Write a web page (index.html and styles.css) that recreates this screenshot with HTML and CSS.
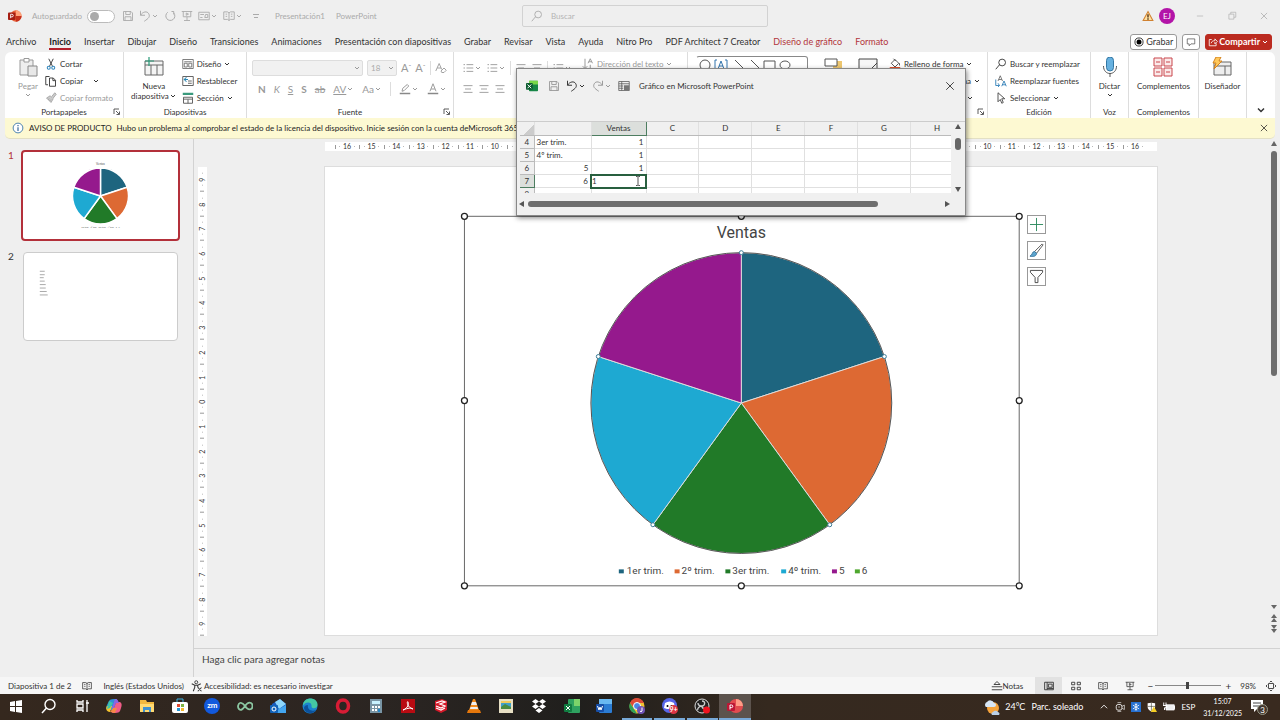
FILE: index.html
```html
<!DOCTYPE html>
<html lang="es">
<head>
<meta charset="utf-8">
<title>Presentación1 - PowerPoint</title>
<link rel="stylesheet" href="styles.css">
</head>
<body>
<svg class="defs" aria-hidden="true">
  <symbol id="chev" viewBox="0 0 8 8"><path d="M2 3l2 2 2-2" fill="none" stroke="currentColor"/></symbol>
  <symbol id="launch" viewBox="0 0 8 8"><path d="M1 6V1h5M3 3l3 3M6.500 3.500v3h-3" fill="none" stroke="currentColor" stroke-width=".8"/></symbol>
  <symbol id="x" viewBox="0 0 16 16"><path d="M3 3l10 10M13 3L3 13" fill="none" stroke="currentColor" stroke-width="1.200"/></symbol>
  <symbol id="save" viewBox="0 0 16 16"><path d="M2 2h10l2 2v10H2zM5 2v4h6V2M4 14V9h8v5" fill="none" stroke="currentColor" stroke-width="1.200"/></symbol>
  <symbol id="undo" viewBox="0 0 16 16"><path d="M2 1v6h6M2 7c3-5 9-6 11-2s0 6-6 10" fill="none" stroke="currentColor" stroke-width="1.300"/></symbol>
  <symbol id="redo" viewBox="0 0 16 16"><path d="M14 1v6H8M14 7C11 2 5 1 3 5s0 6 6 10" fill="none" stroke="currentColor" stroke-width="1.300"/></symbol>
  <symbol id="repeat" viewBox="0 0 16 16"><path d="M10 2h3v4M13 4a6 6 0 1 1-8-1" fill="none" stroke="currentColor" stroke-width="1.300"/></symbol>
  <symbol id="search" viewBox="0 0 16 16"><circle cx="9.500" cy="6" r="4.500" fill="none" stroke="currentColor" stroke-width="1.200"/><path d="M6 9l-5 6" stroke="currentColor" stroke-width="1.200"/></symbol>
  <symbol id="show" viewBox="0 0 16 16"><path d="M1 2h14M3 2v7h10V2M8 9v5M4 14h8M7 4l3 1.500L7 7z" fill="none" stroke="currentColor" stroke-width="1.200"/></symbol>
  <symbol id="card" viewBox="0 0 16 16"><path d="M1 3h14v10H1zM3 6h5M3 10h3M9 10h4V6h-3z" fill="none" stroke="currentColor" stroke-width="1.200"/></symbol>
  <symbol id="book" viewBox="0 0 16 16"><path d="M8 3v11M1 2.500h5l2 1.500 2-1.500h5v10h-5L8 14l-2-1.500H1zM3.500 5.500h2M3.500 8.500h2M10.500 5.500h2M10.500 8.500h2" fill="none" stroke="currentColor" stroke-width="1.200"/></symbol>
  <symbol id="lines" viewBox="0 0 16 16"><path d="M2 3.500h12M4 8h8M2 12.500h12" stroke="currentColor" stroke-width="1.200"/></symbol>
  <symbol id="bullets" viewBox="0 0 16 16"><path d="M6 3.500h9M6 8h9M6 12.500h9M2 3.500h2M2 8h2M2 12.500h2" stroke="currentColor" stroke-width="1.200"/></symbol>
  <symbol id="pie" viewBox="0 0 836 470">
    <path d="M418 237V86A151 151 0 0 1 561.600 190.300z" fill="#1e657f"/>
    <path d="M418 237L561.600 190.300A151 151 0 0 1 506.800 359.200z" fill="#dd6933"/>
    <path d="M418 237L506.800 359.200A151 151 0 0 1 329.200 359.200z" fill="#217a28"/>
    <path d="M418 237L329.200 359.200A151 151 0 0 1 274.400 190.300z" fill="#1ea9d2"/>
    <path d="M418 237L274.400 190.300A151 151 0 0 1 418 86z" fill="#95198d"/>
  </symbol>
</svg>

<header class="titlebar">
  <div class="quick">
    <svg class="i14" viewBox="0 0 16 16"><circle cx="9" cy="8" r="6.500" fill="#e8623a"/><path d="M9 1.500A6.500 6.500 0 0 1 15.500 8H9z" fill="#ffa37b"/><path d="M9 8h6.500A6.500 6.500 0 0 1 9 14.500z" fill="#c5301c"/><rect y="4" width="8.500" height="8.500" rx="1" fill="#a51d12"/><path d="M3 10.500V6h1.500a1.500 1.500 0 0 1 0 3H3" fill="none" stroke="#fff"/></svg>
    <label class="auto">Autoguardado <input type="checkbox" class="switch"></label>
    <button aria-label="Guardar"><svg class="i12"><use href="#save"/></svg></button>
    <button aria-label="Deshacer"><svg class="i12"><use href="#undo"/></svg><svg class="i8"><use href="#chev"/></svg></button>
    <button aria-label="Repetir"><svg class="i12"><use href="#repeat"/></svg></button>
    <button aria-label="Presentar"><svg class="i12"><use href="#show"/></svg></button>
    <button aria-label="Diseños"><svg class="i12"><use href="#card"/></svg><svg class="i8"><use href="#chev"/></svg></button>
    <button aria-label="Vista de lectura"><svg class="i12"><use href="#book"/></svg><svg class="i8"><use href="#chev"/></svg></button>
    <button class="more" aria-label="Personalizar"><svg class="i8" viewBox="0 0 8 8"><path d="M1 2.500h6M2 5.500h4" stroke="currentColor"/></svg></button>
    <span>Presentación1</span><span class="app">PowerPoint</span>
  </div>
  <label class="search"><svg class="i12"><use href="#search"/></svg><input type="text" placeholder="Buscar" aria-label="Buscar"></label>
  <div class="window">
    <svg class="i12" viewBox="0 0 16 16"><path d="M8 2l6.500 12h-13z" fill="#ffe0a0" stroke="#d08130" stroke-width="1.400"/><path d="M8 5.500V10M8 11v2" stroke="#4a2c10" stroke-width="1.800"/></svg>
    <span class="avatar">EJ</span>
    <button aria-label="Minimizar"><svg class="i10" viewBox="0 0 16 16"><path d="M3 8h10" stroke="currentColor"/></svg></button>
    <button aria-label="Restaurar"><svg class="i10" viewBox="0 0 16 16"><path d="M3 5h8v8H3zM6 5V2h8v8h-3" fill="none" stroke="currentColor"/></svg></button>
    <button aria-label="Cerrar"><svg class="i10"><use href="#x"/></svg></button>
  </div>
</header>

<nav class="tabs">
  <button>Archivo</button><button class="current">Inicio</button><button>Insertar</button><button>Dibujar</button><button>Diseño</button><button>Transiciones</button><button>Animaciones</button><button>Presentación con diapositivas</button><button>Grabar</button><button>Revisar</button><button>Vista</button><button>Ayuda</button><button>Nitro Pro</button><button>PDF Architect 7 Creator</button><button class="context">Diseño de gráfico</button><button class="context">Formato</button>
  <div class="actions">
    <button class="box"><svg class="i10" viewBox="0 0 16 16"><circle cx="8" cy="8" r="6.500" fill="none" stroke="currentColor" stroke-width="1.500"/><circle cx="8" cy="8" r="4"/></svg>Grabar</button>
    <button class="box" aria-label="Comentarios"><svg class="i10" viewBox="0 0 16 16"><path d="M2 3h12v8H8l-3 3v-3H2z" fill="none" stroke="currentColor"/></svg></button>
    <button class="box share"><svg class="i10" viewBox="0 0 16 16"><path d="M6 4H2v10h11v-4M5 10c1-4 4-4 6-4V3l4 4-4 4V8" fill="none" stroke="currentColor" stroke-width="1.300"/></svg>Compartir<svg class="i8"><use href="#chev"/></svg></button>
  </div>
</nav>

<section class="ribbon">
  <div class="group">
    <div class="body clipboard">
      <button class="big off"><svg class="i20" viewBox="0 0 20 20"><path d="M2 3h13v15H2z" fill="#eee" stroke="#999"/><path d="M6 1.500h5V5H6z" fill="#fff" stroke="#999"/><path d="M10 9h9v10h-9z" fill="#e8e8e8" stroke="#888"/></svg>Pegar<svg class="i8"><use href="#chev"/></svg></button>
      <div class="rows">
        <button><svg class="i12" viewBox="0 0 16 16"><path d="M5 1l5 10M11 1L6 11" stroke="#333" stroke-width="1.200"/><circle cx="5" cy="13" r="2" fill="none" stroke="#3287bd" stroke-width="1.400"/><circle cx="11" cy="13" r="2" fill="none" stroke="#3287bd" stroke-width="1.400"/></svg>Cortar</button>
        <button><svg class="i12" viewBox="0 0 16 16"><path d="M4 13H1V2h5M6 4h5l3 3v8H6zM10.500 4v3.500H14" fill="none" stroke="#333" stroke-width="1.200"/></svg>Copiar<svg class="i8 wide"><use href="#chev"/></svg></button>
        <button class="off"><svg class="i12" viewBox="0 0 16 16"><path d="M2 8l6 6 3-5-4-4zM9 6l4-5 2 2-4 5M4 10l2-1M6 12l2-2" fill="#ccc" stroke="#999"/></svg>Copiar formato</button>
      </div>
    </div>
    <footer>Portapapeles<svg class="i8 launch"><use href="#launch"/></svg></footer>
  </div>
  <div class="group">
    <div class="body slides">
      <button class="big"><svg class="i20" viewBox="0 0 20 20"><path d="M1 4h18v14H1zM1 8h18M7 8v10M13 8v10" fill="#f4f4f4" stroke="#666"/><path d="M5 0v9M1 4h9" stroke="#2a9a78" stroke-width="1.200"/></svg>Nueva<span>diapositiva<svg class="i8"><use href="#chev"/></svg></span></button>
      <div class="rows">
        <button><svg class="i12" viewBox="0 0 16 16"><path d="M1 2h14v12H1zM3 5h10M3 7h4v5H3zM9 7h4v5H9z" fill="none" stroke="#555"/></svg>Diseño<svg class="i8"><use href="#chev"/></svg></button>
        <button><svg class="i12" viewBox="0 0 16 16"><path d="M1 2h14v12H1zM8 8h5M8 11h5" fill="none" stroke="#555" stroke-width="1.200"/><path d="M6 3L3 6l3 3M3 6h5" fill="none" stroke="#2a88b5" stroke-width="1.400"/></svg>Restablecer</button>
        <button><svg class="i12" viewBox="0 0 16 16"><path d="M1 1h14v3H1z" fill="#3a9a7c"/><path d="M2 7h12v8H2zM2 9.500h12M8 10v5" fill="none" stroke="#555" stroke-width="1.200"/></svg>Sección<svg class="i8"><use href="#chev"/></svg></button>
      </div>
    </div>
    <footer>Diapositivas</footer>
  </div>
  <div class="group off">
    <div class="body two">
      <div class="line">
        <span class="pick name"><select disabled aria-label="Fuente"><option></option></select><svg class="i8"><use href="#chev"/></svg></span>
        <span class="pick"><select disabled aria-label="Tamaño"><option>18</option></select><svg class="i8"><use href="#chev"/></svg></span>
        <button class="glyph">A<sup>ˆ</sup></button><button class="glyph">A<sup>ˇ</sup></button><i></i><button aria-label="Borrar formato"><svg class="i12" viewBox="0 0 16 16"><path d="M1 12L5.500 2 9 10M3 8h5M8 12l4-4 3 3-3 3H9z" fill="none" stroke="currentColor" stroke-width="1.200"/></svg></button>
      </div>
      <div class="line fonts">
        <button><b>N</b></button><button><em>K</em></button><button><u>S</u></button><button><b>S</b></button><button><s>ab</s></button><button><u>AV</u><svg class="i8"><use href="#chev"/></svg></button><button>Aa<svg class="i8"><use href="#chev"/></svg></button><i></i>
        <button aria-label="Resaltado"><svg class="i12" viewBox="0 0 16 16"><path d="M4 11l1-4 6-5 2 2-6 6z" fill="none" stroke="currentColor" stroke-width="1.300"/><path d="M1 13h14v2H1z" fill="#888"/></svg><svg class="i8"><use href="#chev"/></svg></button>
        <button aria-label="Color de fuente"><svg class="i12" viewBox="0 0 16 16"><path d="M4 11l4-10 4 10M5.500 8h5" fill="none" stroke="currentColor" stroke-width="1.300"/><path d="M1 13h14v2H1z" fill="#888"/></svg><svg class="i8"><use href="#chev"/></svg></button>
      </div>
    </div>
    <footer>Fuente<svg class="i8 launch"><use href="#launch"/></svg></footer>
  </div>
  <div class="group off">
    <div class="body">
      <div class="two para">
        <div class="line"><button aria-label="Viñetas"><svg class="i12"><use href="#bullets"/></svg><svg class="i8"><use href="#chev"/></svg></button><button aria-label="Numeración"><svg class="i12"><use href="#bullets"/></svg><svg class="i8"><use href="#chev"/></svg></button><i></i><button aria-label="Reducir sangría"><svg class="i12"><use href="#lines"/></svg></button><button aria-label="Aumentar sangría"><svg class="i12"><use href="#lines"/></svg></button><i></i><button aria-label="Interlineado"><svg class="i12"><use href="#bullets"/></svg><svg class="i8"><use href="#chev"/></svg></button></div>
        <div class="line"><button aria-label="Izquierda"><svg class="i12"><use href="#lines"/></svg></button><button aria-label="Centrar"><svg class="i12"><use href="#lines"/></svg></button><button aria-label="Derecha"><svg class="i12"><use href="#lines"/></svg></button></div>
      </div>
      <div class="rows"><button><svg class="i12" viewBox="0 0 16 16"><path d="M4 1v13M1 11l3 3 3-3M8 7l3-6 3 6M9 5h4M11 9v6" fill="none" stroke="currentColor" stroke-width="1.300"/></svg>Dirección del texto<svg class="i8"><use href="#chev"/></svg></button></div>
    </div>
    <footer>Párrafo</footer>
  </div>
  <div class="group">
    <div class="body draw">
      <div class="gallery">
        <svg viewBox="0 0 108 16"><g fill="none" stroke="#555"><circle cx="8" cy="8" r="5"/><path d="M38 3l9 9M54 3l9 9M67 4h11v8H67z"/><ellipse cx="88" cy="8" rx="5" ry="4"/><path d="M20 3h-2v10h2M28 3h2v10h-2" stroke="#3375ad"/><path d="M21 12l3-8 3 8M22 9h4" stroke="#3375ad"/></g></svg>
      </div>
      <svg class="i20" viewBox="0 0 20 20"><path d="M10 5h9v9h-9z" fill="#edc66f"/><path d="M2 3h12v7H2z" fill="#fff" stroke="#555"/></svg>
      <svg class="i20" viewBox="0 0 20 20"><path d="M1 3h18v14H1z" fill="#f7f7f7" stroke="#444"/><path d="M14 12l5-5" stroke="#444"/></svg>
      <div class="rows">
        <button><svg class="i12" viewBox="0 0 16 16"><path d="M3 7l5-5 5 5-5 5zM6 1l3 3M14 7v3" fill="none" stroke="#444" stroke-width="1.200"/><path d="M1 12h14v3H1z" fill="#e0532e"/></svg>Relleno de forma<svg class="i8"><use href="#chev"/></svg></button>
        <button><svg class="i12" viewBox="0 0 16 16"><path d="M4 11l7-8 2 2-7 7z" fill="none" stroke="#444"/></svg>Contorno de forma<svg class="i8"><use href="#chev"/></svg></button>
        <button><svg class="i12" viewBox="0 0 16 16"><path d="M3 3h10v10H3z" fill="none" stroke="#444"/></svg>Efectos de forma<svg class="i8"><use href="#chev"/></svg></button>
      </div>
    </div>
    <footer>Dibujo<svg class="i8 launch"><use href="#launch"/></svg></footer>
  </div>
  <div class="group">
    <div class="body edit">
      <div class="rows">
        <button><svg class="i12"><use href="#search"/></svg>Buscar y reemplazar</button>
        <button><svg class="i12" viewBox="0 0 16 16"><path d="M4 8l3-7 3 7M5 6h4" fill="none" stroke="#555"/><path d="M9 15l3-7 3 7M10 13h4M1 6v8h5M4 11l2 3-2 2" fill="none" stroke="#2f7fb8" stroke-width="1.200"/></svg>Reemplazar fuentes</button>
        <button><svg class="i12" viewBox="0 0 16 16"><path d="M4 1v12l3-3 2 5 2-1-2-5h4z" fill="none" stroke="#444" stroke-width="1.200"/></svg>Seleccionar<svg class="i8"><use href="#chev"/></svg></button>
      </div>
    </div>
    <footer>Edición</footer>
  </div>
  <div class="group">
    <div class="body one"><button class="big"><svg class="i20" viewBox="0 0 20 20"><rect x="6.500" y="0" width="7" height="14" rx="3.500" fill="#67b1e0" stroke="#3478a5"/><path d="M3.500 9c0 10 13 10 13 0M10 16.500V20" fill="none" stroke="#555"/></svg>Dictar<svg class="i8"><use href="#chev"/></svg></button></div>
    <footer>Voz</footer>
  </div>
  <div class="group">
    <div class="body one"><button class="big"><svg class="i20" viewBox="0 0 20 20"><path d="M1 1h8v8H1zM11 1h8v8h-8zM1 11h8v8H1zM11 11h8v8h-8zM3 5h4M13 5h4M3 15h4M13 15h4" fill="#fbeaea" stroke="#c9474c"/></svg>Complementos</button></div>
    <footer>Complementos</footer>
  </div>
  <div class="group">
    <div class="body one"><button class="big"><svg class="i20" viewBox="0 0 20 20"><path d="M2 5h17v13H2zM2 9h17M13 9v9" fill="#eee" stroke="#666"/><path d="M4 0h5L7 4h3L2 12l2-6H1z" fill="#ffc95c" stroke="#d3811c"/></svg>Diseñador</button></div>
  </div>
  <button class="collapse" aria-label="Contraer"><svg class="i12" viewBox="0 0 8 8"><use href="#chev"/></svg></button>
</section>

<aside class="notice">
  <svg class="i12" viewBox="0 0 16 16"><circle cx="8" cy="8" r="6.500" fill="#fff" stroke="#3a76a8" stroke-width="1.200"/><path d="M8 7v5M8 4v1.500" stroke="#2b5f92" stroke-width="1.500"/></svg>
  <strong>AVISO DE PRODUCTO</strong>
  <p>Hubo un problema al comprobar el estado de la licencia del dispositivo. Inicie sesión con la cuenta deMicrosoft 365</p>
  <button aria-label="Cerrar aviso"><svg class="i10"><use href="#x"/></svg></button>
</aside>

<main class="workspace">
  <ol class="panel">
    <li class="selected"><span>1</span>
      <div class="thumb"><svg viewBox="0 0 836 470"><use href="#pie" width="836" height="470" stroke="#fff" stroke-width="8"/><text x="418" y="72" class="mini-title">Ventas</text><text x="418" y="409" class="mini">1er trim. &#160; 2º trim. &#160; 3er trim. &#160; 4º trim. &#160; 5 &#160; 6</text></svg></div>
    </li>
    <li><span>2</span>
      <div class="thumb"><svg viewBox="0 0 155 88"><path d="M16 18.500h5M16 22h5M16 25h4M16 28.500h5M16 32h6M16 35.500h6M16 39h7M16 42.500h8" stroke="#aaa"/></svg></div>
    </li>
  </ol>
  <section class="editor">
    <div class="canvas">
      <div class="ruler-v"><span>9</span><span>8</span><span>7</span><span>6</span><span>5</span><span>4</span><span>3</span><span>2</span><span>1</span><span>0</span><span>1</span><span>2</span><span>3</span><span>4</span><span>5</span><span>6</span><span>7</span><span>8</span><span>9</span></div>
      <div class="stage">
        <div class="ruler-h"><span>16</span><span>15</span><span>14</span><span>13</span><span>12</span><span>11</span><span>10</span><span>9</span><span>8</span><span>7</span><span>6</span><span>5</span><span>4</span><span>3</span><span>2</span><span>1</span><span>0</span><span>1</span><span>2</span><span>3</span><span>4</span><span>5</span><span>6</span><span>7</span><span>8</span><span>9</span><span>10</span><span>11</span><span>12</span><span>13</span><span>14</span><span>15</span><span>16</span></div>
        <div class="slide">
          <svg class="chart" viewBox="0 0 836 470">
            <text x="418" y="71" class="title">Ventas</text>
            <use href="#pie" width="836" height="470" stroke="#ddd" stroke-width="1"/>
            <circle cx="418" cy="237" r="151" fill="none" stroke="#555"/>
            <path d="M140 49.500h557v371H140z" fill="none" stroke="#666"/>
            <g fill="#fff" stroke="#222" stroke-width="1.300"><circle cx="140" cy="49.500" r="3"/><circle cx="418" cy="49.500" r="3"/><circle cx="697" cy="49.500" r="3"/><circle cx="140" cy="234.500" r="3"/><circle cx="697" cy="234.500" r="3"/><circle cx="140" cy="420.500" r="3"/><circle cx="418" cy="420.500" r="3"/><circle cx="697" cy="420.500" r="3"/></g>
            <g fill="#fff" stroke="#3b7c96"><circle cx="418" cy="86" r="2"/><circle cx="561.600" cy="190.300" r="2"/><circle cx="506.800" cy="359.200" r="2"/><circle cx="329.200" cy="359.200" r="2"/><circle cx="274.400" cy="190.300" r="2"/></g>
            <path d="M295 404h5v4h-5z" fill="#1e657f"/><path d="M351 404h5v4h-5z" fill="#dd6933"/><path d="M402 404h5v4h-5z" fill="#217a28"/><path d="M458 404h5v4h-5z" fill="#1ea9d2"/><path d="M509 404h5v4h-5z" fill="#95198d"/><path d="M532 404h5v4h-5z" fill="#4ea72e"/>
            <g class="legend"><text x="303" y="409">1er trim.</text><text x="358" y="409">2º trim.</text><text x="409" y="409">3er trim.</text><text x="465" y="409">4º trim.</text><text x="516" y="409">5</text><text x="539" y="409">6</text></g>
          </svg>
          <div class="chart-tools">
            <button aria-label="Elementos de gráfico"><svg viewBox="0 0 16 16"><path d="M8 1v14M1 8h14" stroke="#2d8a5e"/></svg></button>
            <button aria-label="Estilos de gráfico"><svg viewBox="0 0 16 16"><path d="M6 9l8-8 1 1-7 9z" fill="#fff" stroke="#555"/><path d="M6 9c-3 0-2 4-5 5 4 1 7 0 7-3z" fill="#5ca5cf" stroke="#37749b"/></svg></button>
            <button aria-label="Filtros de gráfico"><svg viewBox="0 0 16 16"><path d="M1.500 1.500h13v2L9.500 9v5.500h-3V9l-5-5.500z" fill="none" stroke="#444"/></svg></button>
          </div>
        </div>
      </div>
      <div class="scroll"><svg viewBox="0 0 8 8"><path d="M4 1l3 5H1z"/></svg><div class="track"><div class="thumb-v"></div></div><svg viewBox="0 0 8 8"><path d="M4 6l3-4H1z"/></svg><svg viewBox="0 0 8 8"><path d="M4 0l3 4H1zM4 4l3 4H1z"/></svg><svg viewBox="0 0 8 8"><path d="M4 4l3-4H1zM4 8l3-4H1z"/></svg></div>
    </div>
    <div class="notes"><input type="text" placeholder="Haga clic para agregar notas" aria-label="Notas"></div>
  </section>
</main>

<footer class="status">
  <span>Diapositiva 1 de 2</span>
  <svg class="i10"><use href="#book"/></svg>
  <span>Inglés (Estados Unidos)</span>
  <button class="access"><svg class="i12" viewBox="0 0 16 16"><circle cx="7" cy="3" r="2" fill="none" stroke="currentColor" stroke-width="1.200"/><path d="M1 5l4 2h4l4-2M5 7v3l-2 5M9 7v2l1 2M9 10l5 5M14 10l-5 5" fill="none" stroke="currentColor" stroke-width="1.400"/></svg>Accesibilidad: es necesario investigar</button>
  <div class="views">
    <button class="notas"><svg class="i12" viewBox="0 0 16 16"><path d="M8 2l4 4H4zM1 9h14M1 13h14" fill="none" stroke="currentColor" stroke-width="1.200"/></svg>Notas</button>
    <button class="view on" aria-label="Normal"><svg class="i10" viewBox="0 0 16 16"><path d="M1 2h14v12H1zM5 2v12M7 5h6v5H7zM5 12h10" fill="none" stroke="currentColor" stroke-width="1.400"/></svg></button>
    <button class="view" aria-label="Clasificador"><svg class="i10" viewBox="0 0 16 16"><path d="M1 2h5v4H1zM10 2h5v4h-5zM1 10h5v4H1zM10 10h5v4h-5z" fill="none" stroke="currentColor" stroke-width="1.400"/></svg></button>
    <button class="view" aria-label="Lectura"><svg class="i10"><use href="#book"/></svg></button>
    <button class="view" aria-label="Presentación"><svg class="i10"><use href="#show"/></svg></button>
    <button class="zoom" aria-label="Alejar">−</button><input type="range" min="0" max="100" value="49" aria-label="Zoom"><button class="zoom" aria-label="Acercar">+</button>
    <span class="pct">98%</span>
    <button aria-label="Ajustar"><svg class="i10" viewBox="0 0 16 16"><path d="M4 4h8v8H4zM6 2l2-2 2 2M6 14l2 2 2-2M2 6L0 8l2 2M14 6l2 2-2 2" fill="none" stroke="currentColor" stroke-width="1.400"/></svg></button>
  </div>
</footer>

<footer class="taskbar">
  <div class="apps">
    <button aria-label="Inicio"><svg viewBox="0 0 16 16"><path d="M2 4l5-1v5H2zM8 3l6-1v6H8zM2 9h5v5l-5-1zM8 9h6v6l-6-1z" fill="#fff"/></svg></button>
    <button aria-label="Búsqueda"><svg viewBox="0 0 16 16"><circle cx="9" cy="6.500" r="5" fill="none" stroke="#fff" stroke-width="1.400"/><path d="M5.500 10L1 15" stroke="#fff" stroke-width="1.500"/></svg></button>
    <button aria-label="Vista de tareas"><svg viewBox="0 0 16 16"><path d="M3 2v2h6V2M3 6h6v4H3zM3 14v-2h6v2M13 2v12M12 5h3" fill="none" stroke="#fff" stroke-width="1.300"/></svg></button>
    <button aria-label="Copilot"><svg viewBox="0 0 16 16"><path d="M3 3c1-2 4-2 8-2L7 12H3c-3 0-3-3-2-5z" fill="#2e8fd9"/><path d="M1 8l5 0 -2 6c-3 0-5-3-3-6z" fill="#f4c32e"/><path d="M10 4h4c2 1 2 3 1 6l-1 3c-1 2-4 2-8 2z" fill="#ef5c87"/><path d="M9 1c3 0 3 2 4 4h-3L8 10H6z" fill="#8c63e0"/><path d="M3 3l4 2-3 5-3 1z" fill="#3fc6a8"/><path d="M4 14l3-4h4l-2 5z" fill="#f58a45"/></svg></button>
    <button aria-label="Explorador"><svg viewBox="0 0 16 16"><path d="M1 2h6l1 2h7v10H1z" fill="#f1b83f"/><path d="M1 6h14v8H1z" fill="#ffda72"/><path d="M4 9h8v5h-2v-2H6v2H4z" fill="#3f91cf"/></svg></button>
    <button aria-label="Tienda"><svg viewBox="0 0 16 16"><path d="M5 4V1h6v3" fill="none" stroke="#3cb4e5"/><rect y="4" width="16" height="11" rx="2" fill="#fff"/><path d="M5 6h3v3H5z" fill="#e04a32"/><path d="M9 6h3v3H9z" fill="#7cb342"/><path d="M5 10h3v3H5z" fill="#2196d4"/><path d="M9 10h3v3H9z" fill="#f5b92e"/></svg></button>
    <button aria-label="Zoom"><span class="zm">zm</span></button>
    <button aria-label="Infinito"><svg viewBox="0 0 16 16"><path d="M8 8C6 5 4.500 4.500 3 5S0 9 2 11s4 0 6-3 4-4 6-3 2 5 0 6-4 0-6-3z" fill="none" stroke="#8cc7a2" stroke-width="1.800"/></svg></button>
    <button aria-label="Outlook"><svg viewBox="0 0 16 16"><path d="M2 6l8-5 6 5v9H2z" fill="#195bbf"/><path d="M5 4l5-3 6 5-7 5z" fill="#8dd7fb"/><path d="M2 15l14-8v8z" fill="#43a6f0"/><rect y="7" width="8" height="8" rx="1" fill="#1263ba"/><circle cx="4" cy="11" r="2" fill="none" stroke="#fff"/></svg></button>
    <button aria-label="Edge"><svg viewBox="0 0 16 16"><circle cx="8" cy="8" r="7.500" fill="#1b83cf"/><path d="M1 7C2-2 16-1 15.500 7c-.5 4-5 4-6 2 1-5-5-6-8-2z" fill="#44c9a3"/><path d="M6 7c-1 4 3 7 8 5-3 5-11 4-12-2 0-2 2-3 4-3z" fill="#0c519b"/></svg></button>
    <button aria-label="Opera"><svg viewBox="0 0 16 16"><ellipse cx="8" cy="8" rx="5.500" ry="6" fill="none" stroke="#d81c35" stroke-width="3.500"/></svg></button>
    <button aria-label="Calculadora"><svg viewBox="0 0 16 16"><path d="M2 1h12v14H2z" fill="#7995a5"/><path d="M4 3h8v3H4z" fill="#c9f2ff"/><path d="M4 8h2v2H4zM7 8h2v2H7zM10 8h2v2h-2zM4 11h2v2H4zM7 11h2v2H7z" fill="#fff"/><path d="M10 11h2v3h-2z" fill="#2686c8"/></svg></button>
    <button aria-label="Acrobat"><svg viewBox="0 0 16 16"><path d="M1 1h14v14H1z" fill="#b90b12"/><path d="M3 12c5-2 6-6 5-8s-2 5 5 7c-3-2-7 0-10 1z" fill="none" stroke="#fff"/></svg></button>
    <button aria-label="SketchUp"><svg viewBox="0 0 16 16"><path d="M2 3l7-2 5 2v9l-6 3-6-3z" fill="#d31828"/><path d="M3 5l6-2 3 1-5 2 5 2-4 2-5-2M3 10l5 2 4-2" fill="none" stroke="#fff" stroke-width="1.300"/></svg></button>
    <button aria-label="VLC"><svg viewBox="0 0 16 16"><path d="M7 1h2l4 11H3z" fill="#f28a1c"/><path d="M6 4h4l1 3H5zM4.500 9h7l.5 2H4z" fill="#eee"/><path d="M2 12h12l1 3H1z" fill="#e5770b"/></svg></button>
    <button aria-label="Fotos"><svg viewBox="0 0 16 16"><path d="M1 1h14v14H1z" fill="#e7dfc4"/><path d="M3 3h10v8H3z" fill="#3f9fcb"/><path d="M3 9l4-3 6 3v2H3z" fill="#4b8b3f"/><path d="M3 3h10v2H3z" fill="#f1ca5b"/></svg></button>
    <button aria-label="Dropbox"><svg viewBox="0 0 16 16"><path d="M4.500 1L8 3.500 4.500 6 1 3.500zM11.500 1L15 3.500 11.500 6 8 3.500zM4.500 6L8 8.500 4.500 11 1 8.500zM11.500 6L15 8.500 11.500 11 8 8.500zM8 10l3.500 2.500L8 15l-3.500-2.500z" fill="#fff"/></svg></button>
    <button aria-label="Excel"><svg viewBox="0 0 16 16"><rect x="4" y="1" width="12" height="14" rx="1" fill="#2fa260"/><path d="M10 1h6v7h-6z" fill="#7bd36a"/><rect y="6" width="8" height="8" rx="1" fill="#107c41"/><path d="M2 8l4 4M6 8l-4 4" stroke="#fff"/></svg></button>
    <button aria-label="Word"><svg viewBox="0 0 16 16"><rect x="3" y="1" width="13" height="14" rx="1" fill="#2b7cd3"/><path d="M3 1h13v5H3z" fill="#69b8f1"/><rect y="6" width="8" height="8" rx="1" fill="#174ea6"/><path d="M1.500 8l1.500 4 1-3 1 3 1.500-4" fill="none" stroke="#fff"/></svg></button>
    <button class="run" aria-label="Chrome"><svg viewBox="0 0 16 16"><circle cx="8" cy="8" r="7.500" fill="#f2c230"/><path d="M1 5C4-2 12-1 15 5H8L5 10z" fill="#dd4b39"/><path d="M1 5l4 6 3 4.500C1 15-1 9 1 5z" fill="#30a158"/><circle cx="8" cy="8" r="3.500" fill="#4a88e8" stroke="#fff"/><circle cx="12" cy="12" r="4" fill="#7054b6"/><path d="M13 9.500V13q-1 1.500-2 0" fill="none" stroke="#fff"/></svg></button>
    <button class="run" aria-label="Discord"><svg viewBox="0 0 16 16"><circle cx="7.500" cy="7.500" r="7.500" fill="#5866e8"/><path d="M3 5c3-2 6-2 9 0l1 5-3 1H5l-3-1z" fill="#fff"/><circle cx="5.500" cy="8" r="1"/><circle cx="9.500" cy="8" r="1"/><circle cx="11.500" cy="11.500" r="4.500" fill="#dc3545"/><text x="11.500" y="14">9+</text></svg></button>
    <button class="run" aria-label="OBS"><svg viewBox="0 0 16 16"><circle cx="8" cy="8" r="7" fill="#222" stroke="#ddd"/><path d="M8 3c4 0 3 5 0 5S3 11 4 12M8 8c0 3 4 4 5 1M4 5c0 3 2 3 4 3" fill="none" stroke="#ccc" stroke-width="1.400"/><circle cx="12.500" cy="12" r="3.500" fill="#ef1421"/></svg></button>
    <button class="active" aria-label="PowerPoint"><svg viewBox="0 0 16 16"><circle cx="9" cy="8" r="7" fill="#e24c4f"/><path d="M9 1a7 7 0 0 1 7 7H9z" fill="#ff9c86"/><rect y="5" width="8" height="8" rx="1" fill="#bd1735"/><path d="M3 11.500V7h1.500a1.300 1.300 0 0 1 0 2.600H3" fill="none" stroke="#fff"/></svg></button>
  </div>
  <div class="tray">
    <svg viewBox="0 0 16 16"><circle cx="9" cy="9" r="6" fill="#f5a33b"/><path d="M2 8a3 3 0 0 1 1-5 4 4 0 0 1 7 1 2 2 0 0 1 0 4z" fill="#d7e6f5"/><path d="M8 16a2 2 0 0 1 1-3 3 3 0 0 1 5 0 2 2 0 0 1 1 3z" fill="#b9cfe6"/></svg>
    <span class="temp">24°C</span><span class="sky">Parc. soleado</span>
    <svg class="i10" viewBox="0 0 16 16"><path d="M3 10l5-5 5 5" fill="none" stroke="#fff" stroke-width="1.400"/></svg>
    <svg class="i10" viewBox="0 0 16 16"><rect x="2" y="4" width="9" height="9" rx="3" fill="none" stroke="#fff" stroke-width="1.300"/><path d="M11 7l4-2v7l-4-2M4 1h6M4 15h6M5 8h3" stroke="#fff" fill="none"/></svg>
    <svg class="i10" viewBox="0 0 16 16"><path d="M0 0h16v16H0z" fill="#2670d0"/><path d="M8 2v12M3 5l10 6M13 5L3 11M6 3l2 2 2-2M6 13l2-2 2 2" stroke="#fff" fill="none" stroke-width="1.300"/></svg>
    <svg class="i10" viewBox="0 0 16 16"><path d="M1 2l6-1 6 1v6c0 3-3 6-6 7-3-1-6-4-6-7z" fill="#fff"/><path d="M7 1v14M1 7h12" stroke="#443"/><path d="M11 7l5 9H6z" fill="#f6cf25"/></svg>
    <svg class="i12" viewBox="0 0 16 16"><path d="M4 5h11v7H4zM15 7h1v3h-1z" fill="#eee" stroke="#fff"/><path d="M1 2v4M4 2v4M0 6h5v3H2v3" fill="none" stroke="#fff" stroke-width="1.300"/></svg>
    <span class="lang">ESP</span>
    <time>15:07<br>31/12/2025</time>
    <svg class="note" viewBox="0 0 18 16"><path d="M1 1h12v9H7l-3 3v-3H1z" fill="#fff"/><path d="M3 4h8M3 7h8" stroke="#444"/><circle cx="12.500" cy="10.500" r="5" fill="#44372e" stroke="#998"/><text x="12.500" y="13.500">3</text></svg>
  </div>
</footer>

<section class="sheet" aria-label="Gráfico en Microsoft PowerPoint">
  <header>
    <svg class="i12 logo" viewBox="0 0 16 16"><rect x="4" y="1" width="12" height="14" rx="1" fill="#178647"/><path d="M4 1h12v5H4z" fill="#78d749"/><rect y="4" width="9" height="9" rx="1" fill="#0c5c30"/><path d="M2 6l5 5M7 6l-5 5" stroke="#fff" stroke-width="1.300"/></svg>
    <button class="dim" aria-label="Guardar"><svg class="i12"><use href="#save"/></svg></button>
    <button aria-label="Deshacer"><svg class="i12"><use href="#undo"/></svg><svg class="i8"><use href="#chev"/></svg></button>
    <button class="dim" aria-label="Rehacer"><svg class="i12"><use href="#redo"/></svg><svg class="i8"><use href="#chev"/></svg></button>
    <button aria-label="Editar datos"><svg class="i12" viewBox="0 0 16 16"><path d="M1 2h14v12H1zM1 5h14M1 8h6M1 11h6M5 2v12" fill="none" stroke="#555"/><path d="M8 7h7v7H8z" fill="#777"/></svg></button>
    <h2>Gráfico en Microsoft PowerPoint</h2>
    <button class="close" aria-label="Cerrar"><svg class="i12"><use href="#x"/></svg></button>
  </header>
  <div class="grid">
    <div class="clip"><table>
      <colgroup><col class="c0"><col class="c1"><col class="c2"><col><col><col><col><col><col></colgroup>
      <thead><tr><th class="corner"></th><th></th><th class="sel">Ventas</th><th>C</th><th>D</th><th>E</th><th>F</th><th>G</th><th>H</th></tr></thead>
      <tbody>
        <tr><th>4</th><td>3er trim.</td><td class="n">1</td><td></td><td></td><td></td><td></td><td></td><td></td></tr>
        <tr><th>5</th><td>4º trim.</td><td class="n">1</td><td></td><td></td><td></td><td></td><td></td><td></td></tr>
        <tr><th>6</th><td class="n">5</td><td class="n">1</td><td></td><td></td><td></td><td></td><td></td><td></td></tr>
        <tr><th class="sel">7</th><td class="n">6</td><td class="cell"><label><input type="text" value="1" aria-label="Ventas 6"><svg viewBox="0 0 6 10"><path d="M1 .5h1.500l.5.5.5-.5H5M3 1v8M1 9.500h1.500L3 9l.5.5H5" fill="none" stroke="#555"/></svg></label></td><td></td><td></td><td></td><td></td><td></td><td></td></tr>
        <tr><th>8</th><td></td><td></td><td></td><td></td><td></td><td></td><td></td><td></td></tr>
      </tbody>
    </table></div>
    <div class="bar-v"><svg viewBox="0 0 8 8"><path d="M4 1l3 5H1z"/></svg><b></b><svg viewBox="0 0 8 8"><path d="M4 7l3-5H1z"/></svg></div>
  </div>
  <div class="bar-h"><svg viewBox="0 0 8 8"><path d="M1 4l5-3v6z"/></svg><b></b><svg viewBox="0 0 8 8"><path d="M7 4L2 1v6z"/></svg></div>
</section>
</body>
</html>
```
FILE: styles.css
```css
* { box-sizing: border-box; }
body {
  margin: 0;
  height: 100vh;
  display: flex;
  flex-direction: column;
  overflow: hidden;
  background: #efefef;
  color: #333;
  font: 8px/10px Lato, "Open Sans", sans-serif;
}
button, input, select { font: inherit; color: inherit; border: 0; background: none; padding: 0; margin: 0; min-width: 0; }
button { display: inline-flex; align-items: center; white-space: nowrap; }
svg { flex: none; display: block; }
.defs { position: absolute; width: 0; height: 0; }
.i8 { width: 8px; height: 8px; }
.i10 { width: 10px; height: 10px; }
.i12 { width: 12px; height: 12px; }
.i14 { width: 14px; height: 14px; }
.i20 { width: 20px; height: 20px; }

/* Title bar */
.titlebar { flex: none; height: 32px; display: grid; grid-template-columns: 522fr 246fr 512fr; align-items: center; color: #aaa; }
.quick { display: flex; align-items: center; gap: 5px; padding-left: 8px; }
.quick > svg { margin-right: 5px; }
.auto { display: flex; align-items: center; gap: 5px; margin-right: 2px; }
.switch { appearance: none; width: 28px; height: 13px; border: 1px solid #bbb; border-radius: 7px; background: #fff; padding: 1px 2px; }
.switch::before { content: ""; display: block; width: 9px; height: 9px; border-radius: 5px; background: #aaa; }
.more { margin: 0 10px 0 4px; }
.app { margin-left: 6px; }
.search { height: 22px; border: 1px solid #d2d2d2; border-radius: 2px; display: flex; align-items: center; gap: 8px; padding: 0 8px; }
.search input { flex: 1; outline: 0; }
.search input::placeholder { color: #b4b4b4; }
.window { display: flex; align-items: center; justify-content: flex-end; padding-right: 11px; gap: 22px; }
.avatar { width: 16px; height: 16px; border-radius: 8px; background: #b314a8; color: #fff; text-align: center; line-height: 16px; margin: 0 -2px 0 -17px; }

/* Tabs */
.tabs { flex: none; height: 20px; display: flex; align-items: center; gap: 13px; padding: 0 8px 0 6px; font-size: 9px; line-height: 12px; }
.tabs > button { height: 16px; border-bottom: 2px solid transparent; border-top: 2px solid transparent; }
.tabs .current { font-weight: 700; border-bottom-color: #b3202c; color: #222; }
.tabs .context { color: #b2353b; }
.actions { margin-left: auto; display: flex; gap: 5px; }
.box { height: 16px; padding: 0 3px; gap: 2px; border: 1px solid #999; border-radius: 3px; background: #fff; }
.share { background: #bb2b20; border-color: #bb2b20; color: #fff; padding: 0 2px; font-weight: 700; gap: 1px; }

/* Ribbon */
.ribbon {
  flex: none; margin: 0 5px; height: 66px; background: #fff; border-radius: 6px 6px 0 0;
  display: grid; grid-template-columns: 119fr 123fr 207fr 234fr 300fr 103fr 38fr 70fr 48fr 28fr;
}
.group { display: flex; flex-direction: column; border-right: 1px solid #ddd; min-width: 0; }
.group .body { flex: 1; display: flex; padding: 3px 0 0 10px; gap: 10px; min-width: 0; }
.group .clipboard { padding-left: 13px; gap: 7px; }
.group .slides { padding-left: 7px; gap: 5px; }
.group footer { height: 12px; text-align: center; position: relative; line-height: 12px; }
.launch { position: absolute; right: 2px; top: 2px; }
.off, .off > .body { color: #999; }
.off footer { color: #333; }
.rows { display: flex; flex-direction: column; align-items: flex-start; }
.rows button { height: 17px; gap: 2px; }
.rows button > .i12 { margin-right: 1px; }
.rows .wide { margin-left: 7px; }
.big { flex-direction: column; align-self: flex-start; line-height: 10px; }
.big .i20 { margin: 2px 0 4px; }
.big span { display: flex; align-items: center; }
.group .one { padding-left: 0; padding-right: 0; justify-content: center; }
.group .draw { padding: 0 0 0 8px; gap: 15px; }
.draw .i20 { margin-top: 4px; }
.draw .rows { padding-top: 3px; margin-left: -4px; }
.group .edit { padding-left: 7px; }
.gallery { width: 112px; height: 50px; margin-top: 4px; border: 1px solid #888; border-left-color: transparent; border-radius: 3px; }
.gallery svg { width: 108px; height: 16px; }
.group .two { display: flex; flex-direction: column; gap: 4px; padding-left: 5px; padding-top: 7px; }
.group .para { padding: 4px 0 0; margin-left: -2px; }
.line { display: flex; align-items: center; gap: 4px; height: 17px; }
.line i { width: 1px; height: 14px; background: #ddd; }
.fonts { font-size: 10px; justify-content: space-between; padding: 0 6px; }
.pick { position: relative; display: flex; width: 30px; height: 16px; border: 1px solid #ddd; border-radius: 2px; background: #f1f1f1; }
.pick.name { width: 111px; }
.pick select { appearance: none; flex: 1; padding-left: 3px; color: #aaa; opacity: 1; }
.pick svg { position: absolute; right: 1px; top: 3px; }
.glyph { font-size: 11px; }
.glyph sup { font-size: 7px; }
.collapse { align-self: end; justify-self: center; margin-bottom: 2px; }

/* Notice */
.notice { flex: none; margin: 0 5px; height: 21px; background: #fdf9d2; border-bottom: 1px solid #e3e0c4; border-radius: 0 0 5px 5px; display: flex; align-items: center; gap: 5px; padding: 0 6px 0 7px; color: #222; }
.notice strong { font-weight: 400; }
.notice p { margin: 0 auto 0 0; }

/* Workspace */
.workspace { flex: 1; min-height: 0; display: flex; }
.panel { flex: none; width: 194px; margin: 0; padding: 11px 13px 0 8px; list-style: none; border-right: 1px solid #d2d2d2; display: flex; flex-direction: column; gap: 10px; }
.panel li { display: flex; gap: 8px; font-size: 10px; line-height: 10px; }
.panel li span { width: 5px; }
.panel .selected span { color: #b2353b; }
.panel .thumb { flex: 1; background: #fff; border: 1px solid #ccc; border-radius: 4px; margin: 1px 2px; }
.panel .selected .thumb { border: 2px solid #b3303a; margin: 0; }
.thumb svg { width: 100%; }
.mini-title { font-size: 16px; text-anchor: middle; fill: #555; }
.mini { font-size: 11px; text-anchor: middle; fill: #555; }
.editor { flex: 1; min-width: 0; display: flex; flex-direction: column; }
.canvas { flex: 1; min-height: 0; display: flex; padding-left: 4px; }
.ruler-v { flex: none; width: 9px; margin: 28px 0 12px; background: #fff; display: flex; flex-direction: column; }
.ruler-v span { flex: 1; writing-mode: vertical-rl; transform: rotate(180deg); text-align: center; line-height: 9px; font-size: 7px; background: linear-gradient(#999, #999) center top / 4px 1px no-repeat, linear-gradient(#bbb, #bbb) center 25% / 1px 1px no-repeat, linear-gradient(#bbb, #bbb) center 75% / 1px 1px no-repeat; }
.stage { flex: 1; min-width: 0; display: flex; flex-direction: column; align-items: center; padding: 3px 0 0 7px; }
.ruler-h, .slide { width: 79%; }
.ruler-h { height: 9px; margin-bottom: 16px; padding: 0 10px; background: #fff; display: flex; }
.ruler-h span { flex: 1; text-align: center; line-height: 9px; font-size: 7px; background: linear-gradient(#999, #999) left center / 1px 4px no-repeat, linear-gradient(#bbb, #bbb) 20% center / 1px 1px no-repeat, linear-gradient(#bbb, #bbb) 80% center / 1px 1px no-repeat; }
.slide { position: relative; background: #fff; box-shadow: 0 0 0 1px #ddd; }
.chart { width: 100%; }
.title, .legend { font-family: Roboto, sans-serif; fill: #444; }
.title { font-size: 16px; text-anchor: middle; }
.legend { font-size: 10px; }
.chart-tools { position: absolute; left: 84.400%; top: 10.200%; display: flex; flex-direction: column; gap: 7px; }
.chart-tools button { width: 19px; height: 19px; border: 1px solid #999; background: #fff; justify-content: center; }
.chart-tools svg { width: 15px; height: 15px; }
.scroll { flex: none; width: 12px; padding: 1px 0 15px; display: flex; flex-direction: column; align-items: center; gap: 3px; fill: #666; }
.scroll svg { width: 8px; height: 8px; }
.track { flex: 1; width: 6px; }
.thumb-v { height: 50%; border-radius: 3px; background: #6e6e6e; }
.notes { flex: none; height: 29px; border-top: 1px solid #d2d2d2; padding: 3px 8px; font-size: 10px; }
.notes input { width: 100%; height: 14px; outline: 0; }
.notes input::placeholder { color: #444; }

/* Status bar */
.status { flex: none; height: 17px; background: #f6f6f6; display: flex; align-items: center; gap: 11px; padding: 0 4px 0 8px; }
.access { gap: 1px; margin-left: -4px; }
.views { margin-left: auto; display: flex; align-items: center; }
.notas { margin-right: 12px; }
.view { width: 27px; height: 17px; justify-content: center; }
.view.on { background: #e2e2e2; }
.zoom { width: 10px; justify-content: center; font-size: 10px; margin-left: 2px; }
.views input { appearance: none; width: 66px; height: 10px; background: linear-gradient(#888, #888) center / 100% 1px no-repeat; }
.views input::-webkit-slider-thumb { appearance: none; width: 3px; height: 7px; background: #444; }
.pct { margin: 0 10px 0 7px; }

/* Taskbar */
.taskbar { flex: none; height: 26px; background: linear-gradient(90deg, #35281e, #2b2522 30%, #201f1d 45%, #35291f 60%, #392a1f); color: #fff; display: flex; justify-content: space-between; }
.apps { width: 58.700%; display: flex; }
.apps button { flex: 1; justify-content: center; border-bottom: 2px solid transparent; }
.apps svg { width: 16px; height: 16px; }
.apps text { font: 700 7px Lato, sans-serif; text-anchor: middle; fill: #fff; }
.apps .run { border-image: linear-gradient(90deg, transparent 10%, #78a9d8 10%, #78a9d8 90%, transparent 90%) 2; }
.apps .active { background: #5c534d; border-color: #78a9d8; }
.zm { width: 16px; height: 16px; border-radius: 8px; background: #1259dd; font-weight: 700; line-height: 15px; text-align: center; }
.tray { display: flex; align-items: center; gap: 6px; padding-right: 12px; font-size: 9px; }
.tray > svg:first-child { width: 16px; height: 16px; margin-right: -1px; }
.sky { margin-right: 10px; }
.lang { font-size: 8px; }
.tray time { font-size: 7px; line-height: 12px; text-align: center; margin: 0 2px; }
.tray .note { width: 18px; height: 16px; }
.note text { font-size: 8px; text-anchor: middle; fill: #fff; }

/* Floating data sheet */
.sheet { position: absolute; left: 516px; top: 68px; width: 450px; background: #f0f0f0; border: 1px solid #888; box-shadow: 1px 2px 5px #0007; }
.sheet header { height: 52px; padding: 0 9px 18px; display: flex; align-items: center; gap: 6px; }
.sheet .logo { margin-right: 4px; }
.sheet h2 { margin: 0 auto 0 3px; font-size: 8px; font-weight: 400; }
.dim { color: #999; }
.grid { display: flex; padding-left: 3px; border-top: 1px solid #ccc; }
.clip { flex: 1; min-width: 0; height: 71px; overflow: hidden; background: #fff; }
.sheet table { width: 103%; border-collapse: collapse; table-layout: fixed; }
.c0 { width: 14px; }
.c1 { width: 57px; }
.c2 { width: 55px; }
.sheet tr { height: 13px; }
.sheet th, .sheet td { padding: 0 2px; border: 1px solid #e0e0e0; border-width: 0 1px 1px 0; line-height: 12px; height: 13px; font-weight: 400; overflow: hidden; white-space: nowrap; }
.sheet th { background: #f0f0f0; padding: 0; border-color: #bbb; }
.sheet thead th { border-right-color: #e0e0e0; }
.sheet .sel { background: #dcdfdc; border-color: #4d7d60; }
.sheet .n { text-align: right; }
.sheet .corner { background: linear-gradient(135deg, #f0f0f0 60%, #ccc 60%); }
.sheet .cell { border: 2px solid #285f3f; padding: 0 4px 0 0; }
.cell label { display: flex; height: 10px; }
.cell input { flex: 1; width: 0; outline: 0; }
.cell svg { width: 6px; height: 10px; }
.bar-v { width: 14px; padding: 1px 0 0; display: flex; flex-direction: column; align-items: center; fill: #555; }
.bar-v svg { width: 8px; height: 8px; }
.bar-v b { width: 6px; height: 12px; margin: 7px 0 auto; border-radius: 3px; background: #666; }
.bar-h { height: 22px; padding: 0 14px 0 1px; display: flex; align-items: center; fill: #555; }
.bar-h svg { width: 8px; height: 8px; }
.bar-h b { width: 350px; height: 6px; margin: 0 auto 0 2px; border-radius: 3px; background: #6e6e6e; }
```
